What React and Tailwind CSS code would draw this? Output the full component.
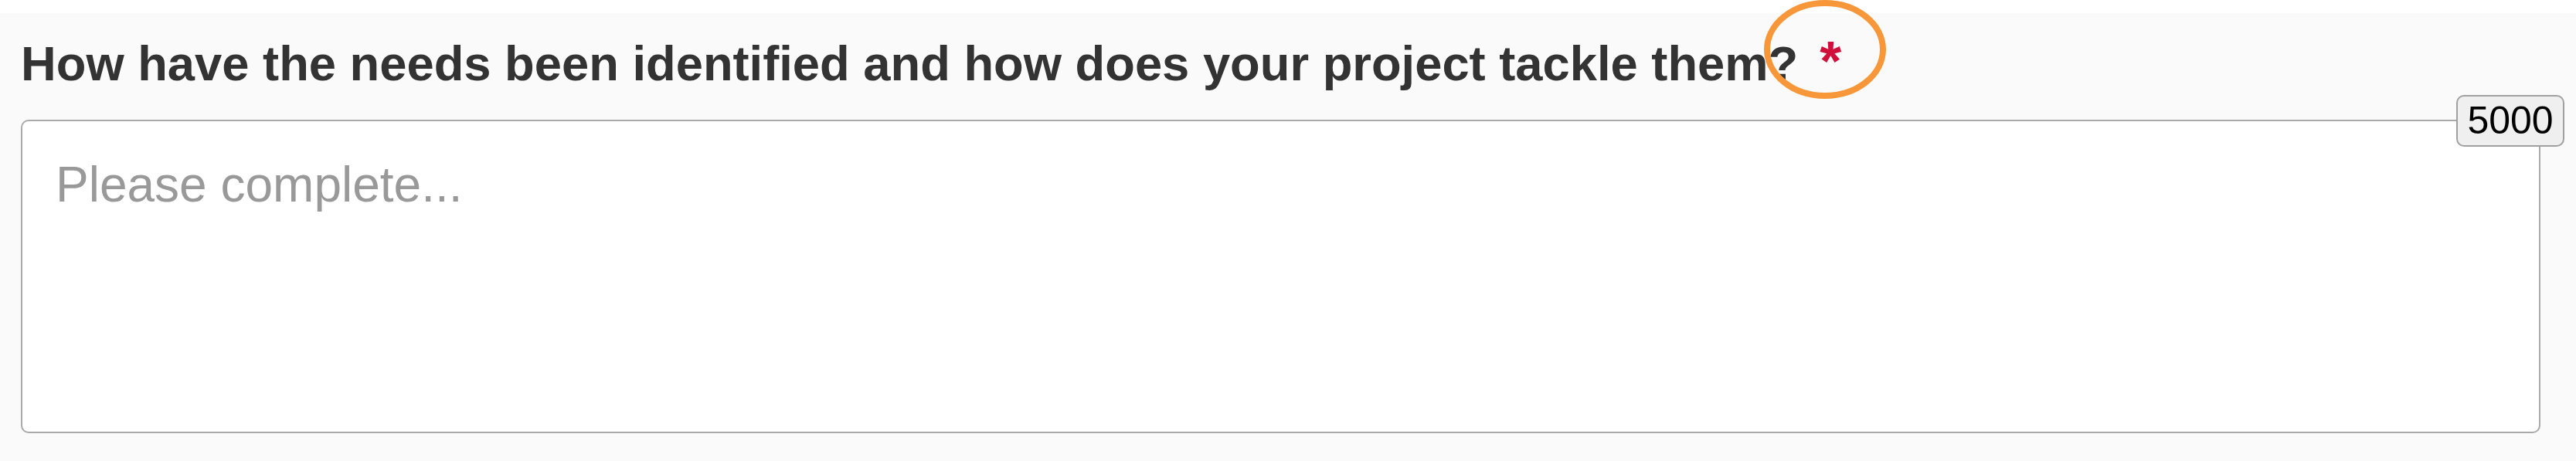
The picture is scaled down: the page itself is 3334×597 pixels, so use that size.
const App = () => {
  return (
    <div className="w-[3334px] h-[597px] bg-white pt-[17px] relative font-['Liberation_Sans',Arial,sans-serif]">
      <div className="bg-[#fafafa] h-[580px] pl-[27px] pr-[46px] pt-[29px]">
        <h2 className="font-bold text-[63.3px] leading-[72px] text-[#333] whitespace-nowrap">
          How have the needs been identified and how does your project tackle them?
          <span className="ml-[28px] text-[72px] leading-[0] text-[#d0103a]">*</span>
        </h2>
        <div className="relative mt-[37px]">
          <textarea
            className="block w-full h-[406px] bg-white border-2 border-[#aaaaaa] rounded-[10px] pl-[43px] pt-[46px] text-[64px] leading-[72px] text-[#333] placeholder:text-[#999] resize-none outline-none"
            placeholder="Please complete..."
          />
          <span className="absolute -top-[32px] -right-[31px] w-[140px] h-[67px] flex items-center justify-center bg-[#efefef] border-2 border-[#a0a0a0] rounded-[10px] text-[50px] text-black">
            5000
          </span>
        </div>
      </div>
      <svg className="absolute left-[2275px] top-0 w-[175px] h-[135px] pointer-events-none" viewBox="0 0 175 135">
        <ellipse cx="87" cy="64" rx="75" ry="60" fill="none" stroke="#f7973a" strokeWidth="8" />
      </svg>
    </div>
  )
}

export default App
